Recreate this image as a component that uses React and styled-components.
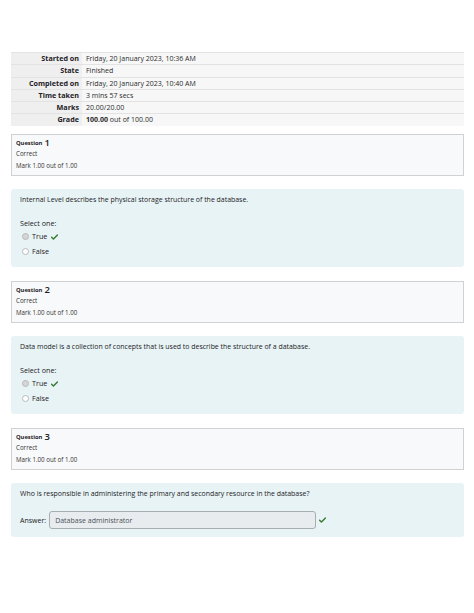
import styled, { createGlobalStyle } from "styled-components";

const GlobalStyle = createGlobalStyle`
    body {
        margin: 0;
        background: #ffffff;
        font-family: "Open Sans", "Noto Sans", sans-serif;
        color: #1d2125;
    }
`

const summary = [
    { label: "Started on", value: "Friday, 20 January 2023, 10:36 AM" },
    { label: "State", value: "Finished" },
    { label: "Completed on", value: "Friday, 20 January 2023, 10:40 AM" },
    { label: "Time taken", value: "3 mins 57 secs" },
    { label: "Marks", value: "20.00/20.00" },
    { label: "Grade", value: <><b>100.00</b> out of 100.00</> },
];

const Check = () => (
    <CheckMark viewBox="0 0 12 10">
        <path d="M1 5.5 L4.2 8.5 L11 1.5" fill="none" stroke="#357a32" strokeWidth="2.4" strokeLinecap="round" strokeLinejoin="round" />
    </CheckMark>
);

const InfoBox = ({ number }) => (
    <Info>
        <QuestionTitle>Question <QuestionNo>{number}</QuestionNo></QuestionTitle>
        <InfoLine>Correct</InfoLine>
        <InfoLine>Mark 1.00 out of 1.00</InfoLine>
    </Info>
);

const TrueFalse = ({ text }) => (
    <Content>
        <Prompt>{text}</Prompt>
        <SelectLabel>Select one:</SelectLabel>
        <Option><Radio $checked /> True <Check /></Option>
        <Option><Radio /> False</Option>
    </Content>
);

const App = () => (
    <>
        <GlobalStyle />
        <Page>
            <Summary>
                {summary.map((row) => (
                    <SummaryRow key={row.label}>
                        <Label>{row.label}</Label>
                        <Value>{row.value}</Value>
                    </SummaryRow>
                ))}
            </Summary>

            <InfoBox number="1" />
            <TrueFalse text="Internal Level describes the physical storage structure of the database." />

            <InfoBox number="2" />
            <TrueFalse text="Data model is a collection of concepts that is used to describe the structure of a database." />

            <InfoBox number="3" />
            <Content $short>
                <Prompt>Who is responsible in administering the primary and secondary resource in the database?</Prompt>
                <AnswerRow>
                    Answer:
                    <AnswerField>Database administrator</AnswerField>
                    <Check />
                </AnswerRow>
            </Content>
        </Page>
    </>
);

const Page = styled.div`
    display: flex;
    flex-direction: column;
    gap: 13.5px;
    padding: 52px 10px 60px 11px;
`

const Summary = styled.div`
    display: flex;
    flex-direction: column;
    margin-bottom: -5.5px;
`

const SummaryRow = styled.div`
    display: grid;
    grid-template-columns: 71px 1fr;
    height: 12.3px;
    box-sizing: border-box;
    border-top: 1px solid #e3e3e3;
    font-size: 7px;
    line-height: 11.3px;
    overflow: hidden;
`

const Label = styled.div`
    background: #efefef;
    text-align: right;
    font-weight: 700;
    font-size: 7.2px;
    padding-right: 3px;
`

const Value = styled.div`
    background: #f7f7f7;
    padding-left: 4px;
    color: #2b2b2b;
`

const Info = styled.div`
    height: 42px;
    box-sizing: border-box;
    border: 1px solid #cfd1d3;
    background: #f8f9fa;
    padding: 2px 4px;
    display: flex;
    flex-direction: column;
`

const QuestionTitle = styled.div`
    font-size: 5.8px;
    font-weight: 700;
    height: 11px;
    display: flex;
    align-items: flex-end;
    gap: 2px;
    line-height: 1;
    padding-bottom: 1px;
`

const QuestionNo = styled.span`
    font-size: 9.5px;
    font-weight: 600;
    position: relative;
    top: 0.8px;
`

const InfoLine = styled.div`
    font-size: 6.2px;
    line-height: 12.5px;
    color: #333;
`

const Content = styled.div`
    background: #e7f3f5;
    border-radius: 3px;
    padding: 5px 9px;
    height: ${(p) => (p.$short ? "54px" : "78px")};
    box-sizing: border-box;
`

const Prompt = styled.div`
    font-size: 6.95px;
    line-height: 12px;
    margin-bottom: 12px;
`

const SelectLabel = styled.div`
    font-size: 7.2px;
    line-height: 11px;
`

const Option = styled.div`
    display: flex;
    align-items: center;
    gap: 3px;
    font-size: 7.2px;
    line-height: 14.5px;
    padding-left: 2px;
`

const Radio = styled.span`
    width: 5px;
    height: 5px;
    border-radius: 50%;
    border: 0.8px solid #b9b9b9;
    background: ${(p) => (p.$checked ? "#d5d5d5" : "#ffffff")};
`

const CheckMark = styled.svg`
    width: 7px;
    height: 6px;
    margin-left: 1px;
`

const AnswerRow = styled.div`
    display: flex;
    align-items: center;
    gap: 2px;
    font-size: 7px;
    margin-top: -1px;
`

const AnswerField = styled.div`
    width: 267px;
    height: 18px;
    box-sizing: border-box;
    border: 1px solid #a8adb2;
    border-radius: 3px;
    background: #e9ecef;
    padding-left: 5px;
    display: flex;
    align-items: center;
    color: #495057;
    margin-left: 1px;
`

export default App;
